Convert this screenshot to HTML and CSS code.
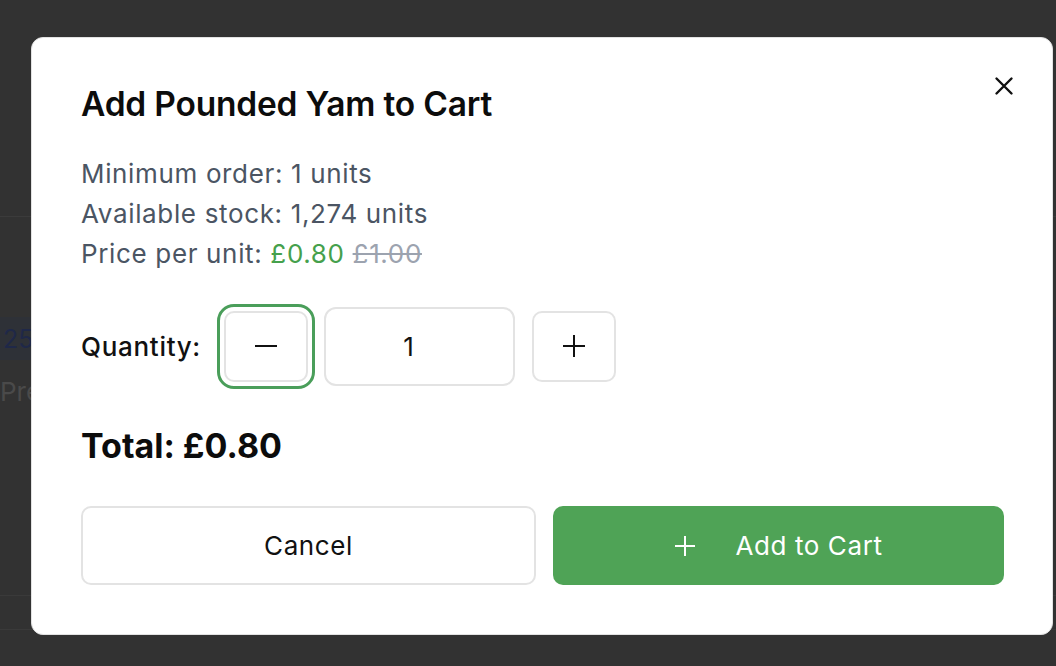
FILE: index.html
```html
<!DOCTYPE html>
<html lang="en">
<head>
<meta charset="utf-8">
<title>Add to Cart</title>
<link rel="stylesheet" href="styles.css">
</head>
<body>
<div class="page">
  <div class="page-head"></div>
  <div class="page-row"><span class="row-num">25</span></div>
  <div class="page-text">Pre</div>
  <div class="page-foot"></div>
  <div class="page-foot2"></div>
</div>

<div class="overlay">
  <div class="modal" role="dialog">
    <button class="close" aria-label="Close">
      <svg width="20" height="20" viewBox="0 0 20 20"><path d="M2.5 2.5 L17.5 17.5 M17.5 2.5 L2.5 17.5" stroke="#111" stroke-width="2.4" stroke-linecap="round"/></svg>
    </button>
    <h2 class="title">Add Pounded Yam to Cart</h2>
    <div class="info">
      <p>Minimum order: 1 units</p>
      <p>Available stock: 1,274 units</p>
      <p>Price per unit: <span class="price">£0.80</span> <s class="old">£1.00</s></p>
    </div>
    <div class="qty">
      <span class="qty-label">Quantity:</span>
      <button class="step step-minus" aria-label="Decrease">
        <svg width="24" height="24" viewBox="0 0 24 24"><path d="M1 12 H23" stroke="#111" stroke-width="2"/></svg>
      </button>
      <div class="qty-input">1</div>
      <button class="step step-plus" aria-label="Increase">
        <svg width="24" height="24" viewBox="0 0 24 24"><path d="M1 12 H23 M12 1 V23" stroke="#111" stroke-width="2"/></svg>
      </button>
    </div>
    <div class="total">Total: £0.80</div>
    <div class="actions">
      <button class="btn btn-cancel">Cancel</button>
      <button class="btn btn-add">
        <svg width="22" height="22" viewBox="0 0 22 22"><path d="M1 11 H21 M11 1 V21" stroke="#fff" stroke-width="2"/></svg>
        <span>Add to Cart</span>
      </button>
    </div>
  </div>
</div>
</body>
</html>
```

FILE: styles.css
```css
* { box-sizing: border-box; }
html, body { margin: 0; padding: 0; }
body {
  background: #323232;
  font-family: Inter, "Noto Sans", sans-serif;
  width: 1056px;
  height: 666px;
  overflow: hidden;
}
.page { height: 666px; }
.page-head { height: 217px; border-bottom: 1px solid #3b3b3b; }
.page-row {
  margin-top: 100px;
  height: 43px;
  background: #2e3137;
  display: flex;
  align-items: center;
}
.row-num { color: #1f2848; font-size: 25px; padding-left: 3px; }
.page-text { color: #4a4a4a; font-size: 26px; margin-top: 17px; line-height: 30px; }
.page-foot { margin-top: 188px; border-top: 1px solid #3a3a3a; }
.page-foot2 { margin-top: 33px; border-top: 1px solid #3a3a3a; }

.overlay {
  position: fixed;
  inset: 0;
}
.modal {
  position: absolute;
  left: 31px;
  top: 37px;
  width: 1022px;
  height: 598px;
  background: #fff;
  border: 1px solid #e2e2e2;
  border-radius: 12px;
  padding: 46px 48px 48px 49px;
  color: #111;
}
.close {
  position: absolute;
  top: 33px;
  right: 33px;
  width: 30px;
  height: 30px;
  border: 0;
  background: none;
  padding: 0;
  display: flex;
  align-items: center;
  justify-content: center;
}
.title {
  margin: 0;
  font-size: 33.5px;
  line-height: 40px;
  font-weight: 600;
  letter-spacing: -0.2px;
  color: #0c0c0c;
}
.info { margin-top: 30px; }
.info p {
  margin: 0;
  font-size: 26px;
  line-height: 40px;
  letter-spacing: 0.65px;
  color: #4b5563;
}
.price { color: #45a04c; font-weight: 400; }
.old { color: #9ca3af; }
.qty {
  margin-top: 32px;
  display: flex;
  align-items: center;
  height: 80px;
}
.qty-label { font-size: 26px; letter-spacing: 0.7px; font-weight: 500; color: #111; margin-right: 23px; }
.step {
  width: 84px;
  height: 71px;
  border: 2px solid #e3e3e3;
  border-radius: 10px;
  background: #fff;
  display: flex;
  align-items: center;
  justify-content: center;
  padding: 0;
}
.step-minus {
  outline: 3px solid #4a9e5a;
  outline-offset: 4px;
  border-radius: 10px;
}
.qty-input {
  width: 191px;
  height: 79px;
  margin: 0 17px 0 16px;
  padding-right: 22px;
  border: 2px solid #e3e3e3;
  border-radius: 12px;
  display: flex;
  align-items: center;
  justify-content: center;
  font-size: 26px;
  color: #111;
}
.total {
  margin-top: 40px;
  font-size: 34px;
  font-weight: 700;
  line-height: 40px;
  color: #0c0c0c;
}
.actions {
  margin-top: 40px;
  display: flex;
  gap: 17px;
}
.btn {
  flex: 1;
  height: 79px;
  border-radius: 10px;
  font-family: inherit;
  font-size: 26px;
  letter-spacing: 0.6px;
  display: flex;
  align-items: center;
  justify-content: center;
}
.btn-cancel {
  background: #fff;
  border: 2px solid #e3e3e3;
  color: #111;
}
.btn-add {
  background: #4fa356;
  border: 0;
  color: #fff;
  gap: 39px;
}
```
